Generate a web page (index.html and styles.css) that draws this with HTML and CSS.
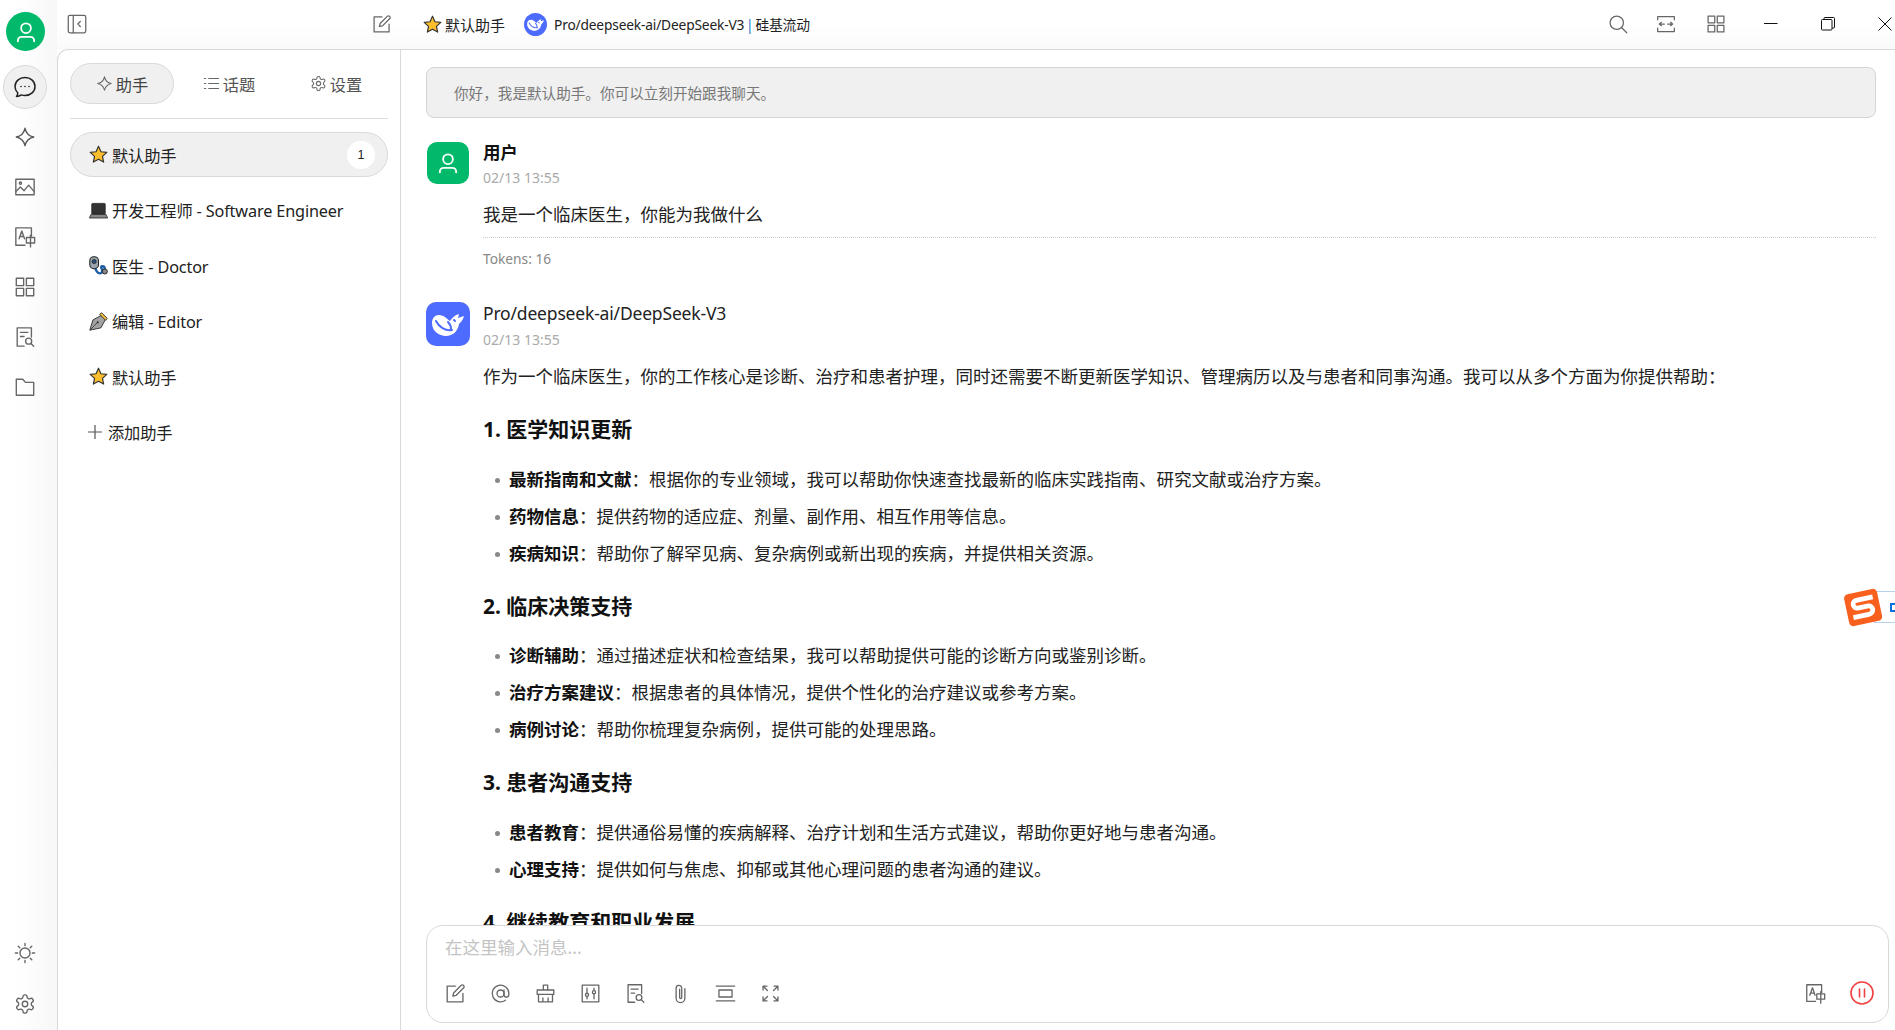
FILE: index.html
```html
<!DOCTYPE html>
<html lang="zh-CN">
<head>
<meta charset="utf-8">
<title>Cherry Studio</title>
<link rel="stylesheet" href="styles.css">
</head>
<body>
<svg class="defs" aria-hidden="true">
  <symbol id="i-edit" viewBox="0 0 24 24"><path d="M12 3.500H2.500v18h18V12"/><path d="M9 15l.8-3.600L18.600 2.600a1.600 1.600 0 0 1 2.300 0l.5.5a1.600 1.600 0 0 1 0 2.300L12.600 14.200z"/></symbol>
  <symbol id="i-sidebar" viewBox="0 0 24 24"><rect x="1.500" y="1.500" width="21" height="21" rx="2"/><path d="M7.500 1.500v21"/><path d="M16 9l-3 3 3 3"/></symbol>
  <symbol id="i-spark" viewBox="0 0 24 24"><path d="M12 2.500c1.200 5.600 3.900 8.300 9.500 9.500-5.600 1.200-8.300 3.900-9.500 9.500-1.200-5.600-3.900-8.300-9.500-9.500 5.600-1.200 8.300-3.900 9.500-9.500z"/></symbol>
  <symbol id="i-image" viewBox="0 0 24 24"><rect x="2" y="3.500" width="20" height="17"/><circle cx="7" cy="7.800" r="1.200"/><path d="M2 17l5-5 4 4 5-6 6 7"/></symbol>
  <symbol id="i-trans" viewBox="0 0 24 24"><path d="M12 21H2V2h17v9"/><path d="M5.500 14l3-8.500 3 8.500M6.600 11.500h3.800"/><rect x="13.500" y="12.500" width="9" height="6"/><path d="M18 10v13"/></symbol>
  <symbol id="i-grid" viewBox="0 0 24 24"><rect x="2.500" y="2.500" width="8" height="8"/><rect x="13.500" y="2.500" width="8" height="8"/><rect x="2.500" y="13.500" width="8" height="8"/><rect x="13.500" y="13.500" width="8" height="8"/></symbol>
  <symbol id="i-docs" viewBox="0 0 24 24"><path d="M11 22H3.500V2h15.500v10"/><path d="M7 7h8M7 11.500h4"/><circle cx="16" cy="16.500" r="3.300"/><path d="M18.500 19l3 3"/></symbol>
  <symbol id="i-folder" viewBox="0 0 24 24"><path d="M2.500 3.500h7l3 3.500h9v14h-19z"/></symbol>
  <symbol id="i-gear" viewBox="0 0 24 24"><path d="M12.220 2h-.44a2 2 0 0 0-2 2v.18a2 2 0 0 1-1 1.730l-.43.25a2 2 0 0 1-2 0l-.15-.08a2 2 0 0 0-2.730.73l-.22.38a2 2 0 0 0 .73 2.730l.15.1a2 2 0 0 1 1 1.720v.51a2 2 0 0 1-1 1.740l-.15.09a2 2 0 0 0-.73 2.730l.22.38a2 2 0 0 0 2.730.73l.15-.08a2 2 0 0 1 2 0l.43.25a2 2 0 0 1 1 1.730V20a2 2 0 0 0 2 2h.44a2 2 0 0 0 2-2v-.18a2 2 0 0 1 1-1.730l.43-.25a2 2 0 0 1 2 0l.15.08a2 2 0 0 0 2.730-.73l.22-.39a2 2 0 0 0-.73-2.730l-.15-.08a2 2 0 0 1-1-1.740v-.5a2 2 0 0 1 1-1.740l.15-.09a2 2 0 0 0 .73-2.730l-.22-.38a2 2 0 0 0-2.730-.73l-.15.08a2 2 0 0 1-2 0l-.43-.25a2 2 0 0 1-1-1.730V4a2 2 0 0 0-2-2z"/><circle cx="12" cy="12" r="3"/></symbol>
  <symbol id="i-user" viewBox="0 0 24 24"><circle cx="12" cy="8.500" r="4.500"/><path d="M4.500 20.500v-.5a3.500 3.500 0 0 1 3.500-3.500h8a3.500 3.500 0 0 1 3.500 3.500v.5"/></symbol>
  <symbol id="i-star" viewBox="0 0 24 24"><path class="star" d="M12 1.500l3.100 7 7.400.8-5.500 5 1.500 7.300-6.500-3.700-6.500 3.700L7 14.300l-5.500-5 7.400-.8z"/></symbol>
  <symbol id="i-whale" viewBox="0 0 44 44"><path class="whale" d="M6 21c0-5 3-8 7-8 5 0 8 4 11 6 2-3 5-6 9-7l-1 4 6-2c-1 4-3 6-5 8-1 7-6 12-13 12C13 34 6 29 6 21z"/><path class="whale-cut" d="M10 19c3 6 9 10 16 9M22 20c2 2 3 5 3 7M28 18l1 1"/></symbol>
</svg>

<div class="app">
  <aside class="rail">
    <div class="rail-avatar"><svg class="ic ic-avatar"><use href="#i-user"/></svg></div>
    <nav class="rail-nav">
      <a class="rail-btn active">
        <svg class="ic ic-msg" viewBox="0 0 24 24"><path d="M12 2.500c5.800 0 10 3.900 10 9s-4.200 9-10 9c-1.300 0-2.500-.2-3.600-.6-1.400 1-3.100 1.500-4.900 1.500.8-1 1.300-2.100 1.300-3.300C3.300 16.500 2 14.200 2 11.500c0-5.100 4.200-9 10-9z"/><circle class="dot" cx="8" cy="11.500" r=".8"/><circle class="dot" cx="12" cy="11.500" r=".8"/><circle class="dot" cx="16" cy="11.500" r=".8"/></svg>
      </a>
      <a class="rail-btn"><svg class="ic ic-spark"><use href="#i-spark"/></svg></a>
      <a class="rail-btn"><svg class="ic"><use href="#i-image"/></svg></a>
      <a class="rail-btn"><svg class="ic"><use href="#i-trans"/></svg></a>
      <a class="rail-btn"><svg class="ic"><use href="#i-grid"/></svg></a>
      <a class="rail-btn"><svg class="ic"><use href="#i-docs"/></svg></a>
      <a class="rail-btn"><svg class="ic"><use href="#i-folder"/></svg></a>
    </nav>
    <div class="rail-bottom">
      <a class="rail-btn">
        <svg class="ic" viewBox="0 0 24 24"><circle cx="12" cy="12" r="5.500"/><path d="M12 1.500v2.500M12 20v2.500M1.500 12H4M20 12h2.500M4.600 4.600l1.700 1.700M17.700 17.700l1.700 1.700M4.600 19.400l1.700-1.700M17.700 6.300l1.700-1.700"/></svg>
      </a>
      <a class="rail-btn"><svg class="ic"><use href="#i-gear"/></svg></a>
    </div>
  </aside>

  <div class="shell">
    <header class="topbar">
      <div class="top-left">
        <svg class="ic ic-20"><use href="#i-sidebar"/></svg>
        <svg class="ic ic-edit-top"><use href="#i-edit"/></svg>
      </div>
      <div class="top-title">
        <svg class="ic-star-s"><use href="#i-star"/></svg>
        <span class="top-name">默认助手</span>
        <svg class="model-logo" viewBox="0 0 44 44"><circle class="logo-bg" cx="22" cy="22" r="22"/><use href="#i-whale"/></svg>
        <span class="top-model">Pro/deepseek-ai/DeepSeek-V3 <span class="sep">|</span> 硅基流动</span>
      </div>
      <div class="top-right">
        <svg class="ic ic-search" viewBox="0 0 24 24"><circle cx="10.500" cy="10.500" r="8"/><path d="M16.500 16.500l6 6"/></svg>
        <svg class="ic ic-20" viewBox="0 0 24 24"><path d="M2 7V3h20v4M2 17v4h20v-4"/><path d="M10 12H4m2.500-2L4 12l2.500 2M14 12h6m-2.500-2l2.500 2-2.500 2"/></svg>
        <svg class="ic ic-20"><use href="#i-grid"/></svg>
        <div class="win-btns">
          <svg class="win" viewBox="0 0 14 14"><path d="M0 6.500h13.500"/></svg>
          <svg class="win" viewBox="0 0 14 14"><rect x=".5" y="2.500" width="10.500" height="10.500" rx="1"/><path d="M3 2.500V1.500a1 1 0 0 1 1-1h8.500a1 1 0 0 1 1 1V10a1 1 0 0 1-1 1H11"/></svg>
          <svg class="win" viewBox="0 0 14 14"><path d="M.5.500l13 13M13.500.500l-13 13"/></svg>
        </div>
      </div>
    </header>

    <div class="body">
      <section class="panel">
        <div class="tabs">
          <a class="tab active"><svg class="ic ic-tab"><use href="#i-spark"/></svg>助手</a>
          <a class="tab"><svg class="ic ic-tab" viewBox="0 0 24 24"><path d="M8 5h14M8 12h14M8 19h14M2 5h2M2 12h2M2 19h2"/></svg>话题</a>
          <a class="tab"><svg class="ic ic-tab"><use href="#i-gear"/></svg>设置</a>
        </div>
        <ul class="assistants">
          <li class="assistant active">
            <svg class="emoji"><use href="#i-star"/></svg><span class="a-name">默认助手</span><span class="badge">1</span>
          </li>
          <li class="assistant">
            <svg class="emoji" viewBox="0 0 24 24"><rect class="lap-screen" x="3.500" y="3" width="17" height="13.500" rx="1"/><path class="lap-base" d="M2.500 17h19l2 4.500H.5z"/></svg><span class="a-name">开发工程师 - Software Engineer</span>
          </li>
          <li class="assistant">
            <svg class="emoji" viewBox="0 0 24 24"><path class="steth-tube" d="M8 14c0 4 3 8 6 8s3-4 2-6-1-3 1-3 3 2 3 4"/><rect class="steth-head" x="1" y="1" width="11" height="15" rx="5"/><circle class="steth-in" cx="6.500" cy="7" r="2.600"/><circle class="steth-end" cx="20" cy="19.500" r="3.200"/></svg><span class="a-name">医生 - Doctor</span>
          </li>
          <li class="assistant">
            <svg class="emoji" viewBox="0 0 24 24"><path class="pen-body" d="M1 23l4-13L16 4l5 5-6 11z"/><path class="pen-tip" d="M16 1l7 7-2 2.500L13.500 3z"/><path class="pen-line" d="M1.500 22.500L10 14"/><circle class="pen-hole" cx="11" cy="13" r="1.400"/></svg><span class="a-name">编辑 - Editor</span>
          </li>
          <li class="assistant">
            <svg class="emoji"><use href="#i-star"/></svg><span class="a-name">默认助手</span>
          </li>
          <li class="assistant add">
            <svg class="ic ic-plus" viewBox="0 0 14 14"><path d="M7 0v14M0 7h14"/></svg><span class="a-name">添加助手</span>
          </li>
        </ul>
      </section>

      <main class="main">
        <div class="chat">
          <div class="notice">你好，我是默认助手。你可以立刻开始跟我聊天。</div>

          <article class="msg msg-user">
            <div class="msg-head">
              <div class="msg-avatar user-avatar"><svg class="ic ic-avatar"><use href="#i-user"/></svg></div>
              <div class="msg-meta">
                <div class="msg-name strong">用户</div>
                <div class="msg-time">02/13 13:55</div>
              </div>
            </div>
            <div class="msg-body">
              <p class="para user-text">我是一个临床医生，你能为我做什么</p>
              <div class="msg-foot">Tokens: 16</div>
            </div>
          </article>

          <article class="msg msg-ai">
            <div class="msg-head">
              <svg class="msg-avatar ai-avatar" viewBox="0 0 44 44"><use href="#i-whale"/></svg>
              <div class="msg-meta">
                <div class="msg-name">Pro/deepseek-ai/DeepSeek-V3</div>
                <div class="msg-time">02/13 13:55</div>
              </div>
            </div>
            <div class="msg-body">
              <p class="para">作为一个临床医生，你的工作核心是诊断、治疗和患者护理，同时还需要不断更新医学知识、管理病历以及与患者和同事沟通。我可以从多个方面为你提供帮助：</p>
              <h3>1. 医学知识更新</h3>
              <ul class="points">
                <li><b>最新指南和文献</b>：根据你的专业领域，我可以帮助你快速查找最新的临床实践指南、研究文献或治疗方案。</li>
                <li><b>药物信息</b>：提供药物的适应症、剂量、副作用、相互作用等信息。</li>
                <li><b>疾病知识</b>：帮助你了解罕见病、复杂病例或新出现的疾病，并提供相关资源。</li>
              </ul>
              <h3>2. 临床决策支持</h3>
              <ul class="points">
                <li><b>诊断辅助</b>：通过描述症状和检查结果，我可以帮助提供可能的诊断方向或鉴别诊断。</li>
                <li><b>治疗方案建议</b>：根据患者的具体情况，提供个性化的治疗建议或参考方案。</li>
                <li><b>病例讨论</b>：帮助你梳理复杂病例，提供可能的处理思路。</li>
              </ul>
              <h3>3. 患者沟通支持</h3>
              <ul class="points">
                <li><b>患者教育</b>：提供通俗易懂的疾病解释、治疗计划和生活方式建议，帮助你更好地与患者沟通。</li>
                <li><b>心理支持</b>：提供如何与焦虑、抑郁或其他心理问题的患者沟通的建议。</li>
              </ul>
              <h3>4. 继续教育和职业发展</h3>
            </div>
          </article>
        </div>

        <div class="composer">
          <div class="placeholder">在这里输入消息...</div>
          <div class="tools">
            <svg class="ic ic-tool"><use href="#i-edit"/></svg>
            <svg class="ic ic-tool" viewBox="0 0 24 24"><circle cx="12" cy="12" r="4"/><path d="M16 8v5.500a2.700 2.700 0 0 0 5.500 0V12a9.500 9.500 0 1 0-3.800 7.600"/></svg>
            <svg class="ic ic-tool" viewBox="0 0 24 24"><path d="M9.500 8V2.500h5V8M2.500 8h19v5h-19zM4 13v8.500h16V13M9 21.500V17M15 21.500V17"/></svg>
            <svg class="ic ic-tool" viewBox="0 0 24 24"><rect x="2.500" y="2.500" width="19" height="19"/><path d="M8 6v5M8 16v2M16 6v2M16 13v5"/><circle cx="8" cy="13.500" r="1.800"/><circle cx="16" cy="10.500" r="1.800"/></svg>
            <svg class="ic ic-tool"><use href="#i-docs"/></svg>
            <svg class="ic ic-tool" viewBox="0 0 24 24"><path d="M17 6.500v11a5 5 0 0 1-10 0V6a3.200 3.200 0 0 1 6.400 0v10.500a1.200 1.200 0 0 1-2.400 0V7"/></svg>
            <svg class="ic ic-tool" viewBox="0 0 24 24"><path d="M1.500 3.500h21M1.500 20.500h21"/><rect x="4.500" y="8" width="15" height="8"/></svg>
            <svg class="ic ic-tool" viewBox="0 0 24 24"><path d="M4 4l4.500 4.500M20 4l-4.500 4.500M4 20l4.500-4.500M20 20l-4.500-4.500M3.500 8V3.500H8M16 3.500h4.500V8M3.500 16v4.500H8M16 20.500h4.500V16"/></svg>
            <span class="tools-gap"></span>
            <svg class="ic ic-tool"><use href="#i-trans"/></svg>
            <svg class="ic ic-stop" viewBox="0 0 24 24"><circle cx="12" cy="12" r="11"/><path d="M9.500 8v8M14.500 8v8"/></svg>
          </div>
        </div>
      </main>
    </div>
  </div>
</div>

<div class="sogou">
  <svg class="sogou-logo" viewBox="0 0 40 40"><rect class="sg-bg" x="4" y="5" width="32" height="31" rx="4"/><path class="sg-s" d="M31 12.500H15c-5 0-5 7 0 7.500h10c5 .5 5 8-1 8H9"/></svg>
  <span class="sogou-tab"><span class="sogou-c"></span></span>
</div>
</body>
</html>
```

FILE: styles.css
```css
* { box-sizing: border-box; }
html, body { margin: 0; height: 100%; overflow: hidden; }
body {
  font-family: "Noto Sans", "Noto Sans CJK SC", sans-serif;
  font-size: 17.5px;
  color: #222;
  background: #fff;
}
.defs { position: absolute; width: 0; height: 0; }
.ic { fill: none; stroke: #666; stroke-width: 1.5; stroke-linecap: round; stroke-linejoin: round; width: 22px; height: 22px; flex: none; display: block; }
.star { fill: #fbbf2d; stroke: #333; stroke-width: 1.5; stroke-linejoin: round; }
.whale { fill: #fff; stroke: none; }
.whale-cut { fill: none; stroke: #4d6bfe; stroke-width: 2; stroke-linecap: round; }
.logo-bg { fill: #4d6bfe; }

.app { display: flex; height: 100vh; }

/* rail */
.rail {
  width: 57px; flex: none; display: flex; flex-direction: column; align-items: center;
  padding: 12px 0 4px 0;
  background: linear-gradient(90deg, #fff 30%, #f7f7f7 100%);
}
.rail-avatar { width: 39px; height: 39px; margin-right: 6px; border-radius: 50%; background: #00b96b; display: flex; align-items: center; justify-content: center; }
.ic-avatar { stroke: #fff; stroke-width: 1.7; width: 26px; height: 26px; }
.rail-nav { display: flex; flex-direction: column; gap: 6px; margin-top: 14px; }
.rail-btn { width: 44px; height: 44px; margin-right: 7px; border-radius: 50%; border: 1px solid transparent; display: flex; align-items: center; justify-content: center; }
.rail-btn.active { background: #f0f0f0; border-color: #d9d9d9; }
.rail-bottom { margin-top: auto; display: flex; flex-direction: column; gap: 7px; }
.ic-msg { stroke: #222; width: 24px; height: 24px; }
.dot { fill: #222; stroke: none; }
.ic-spark { stroke: #555; }

/* shell */
.shell { flex: 1; min-width: 0; display: flex; flex-direction: column; }
.topbar {
  height: 49px; flex: none; display: flex; align-items: center; position: relative;
  background: linear-gradient(180deg, #fff 50%, #fafafa 100%);
  padding: 0 0 1px 10px;
}
.top-left { display: flex; align-items: center; width: 356px; }
.ic-20 { width: 20px; height: 20px; }
.ic-edit-top { width: 20px; height: 20px; margin-left: 285px; }
.top-title { display: flex; align-items: center; font-size: 15px; }
.ic-star-s { width: 19px; height: 19px; margin-right: 3px; }
.top-name { margin-right: 19px; }
.model-logo { width: 23px; height: 23px; margin-right: 7px; }
.top-model { color: #222; font-size: 13.75px; letter-spacing: -.17px; word-spacing: -1.5px; }
.sep { color: #1677c9; }
.top-right { margin-left: auto; display: flex; align-items: center; gap: 30px; padding-right: 3px; }
.ic-search { width: 20px; height: 20px; margin-right: -2px; }
.win-btns { display: flex; gap: 43px; margin-left: 8px; }
.win { width: 14px; height: 14px; fill: none; stroke: #111; stroke-width: 1; overflow: visible; }

.body { flex: 1; min-height: 0; display: flex; border-top: 1px solid #d9d9d9; border-left: 1px solid #d9d9d9; border-top-left-radius: 11px; background: #fff; }

/* assistants panel */
.panel { width: 343px; flex: none; border-right: 1px solid #d9d9d9; padding: 13px 12px 0 12px; }
.tabs { display: flex; gap: 3px; padding-bottom: 14px; border-bottom: 1px solid #dcdcdc; }
.tab { flex: 1; height: 41px; display: flex; align-items: center; justify-content: center; gap: 3px; font-size: 16.25px; color: #555; border: 1px solid transparent; border-radius: 21px; }
.tab.active { background: #f0f0f0; border-color: #d9d9d9; color: #444; }
.ic-tab { width: 17px; height: 17px; }
.assistants { list-style: none; margin: 13px 0 0; padding: 0; display: flex; flex-direction: column; gap: 10.5px; }
.assistant { height: 45px; display: flex; align-items: center; padding: 0 12px 0 18px; font-size: 16.25px; color: #222; border: 1px solid transparent; border-radius: 23px; }
.assistant.active { background: #f0f0f0; border-color: #d9d9d9; }
.emoji { width: 19px; height: 19px; flex: none; margin-right: 4px; overflow: visible; }
.a-name { white-space: nowrap; letter-spacing: -.15px; }
.badge { margin-left: auto; width: 28px; height: 28px; border-radius: 50%; background: #fff; font-size: 12.5px; font-family: "Liberation Sans", sans-serif; display: flex; align-items: center; justify-content: center; }
.add { padding-left: 17px; }
.ic-plus { width: 14px; height: 14px; margin-right: 6px; stroke: #555; stroke-width: 1.2; }
.lap-screen { fill: #333; stroke: #222; stroke-width: 1; }
.lap-base { fill: #888; stroke: #222; stroke-width: 1; }
.steth-tube { fill: none; stroke: #1c5fa8; stroke-width: 3; }
.steth-head { fill: #9aa3ab; stroke: #222; stroke-width: 1.300; }
.steth-in { fill: #24527f; stroke: #222; stroke-width: 1; }
.steth-end { fill: #888; stroke: #222; stroke-width: 1.200; }
.pen-body { fill: #a2a2a2; stroke: #333; stroke-width: 1.200; stroke-linejoin: round; }
.pen-tip { fill: #f4c23c; stroke: #333; stroke-width: 1.200; stroke-linejoin: round; }
.pen-line { stroke: #333; stroke-width: 1; }
.pen-hole { fill: #333; }

/* main */
.main { flex: 1; min-width: 0; display: flex; flex-direction: column; }
.chat { flex: 1; min-height: 0; overflow: hidden; padding: 17px 19px 0 25px; }
.notice { height: 51px; display: flex; align-items: center; padding-left: 27px; font-size: 14.6px; color: #777; background: #f0f0f0; border: 1px solid #d4d4d4; border-radius: 8px; }
.msg-head { display: flex; align-items: flex-start; gap: 14px; }
.msg-user { margin: 22px 0 0 1px; }
.msg-ai { margin-top: 33px; }
.msg-avatar { width: 42px; height: 42px; border-radius: 10px; flex: none; margin-top: 2px; }
.user-avatar { background: #00b96b; display: flex; align-items: center; justify-content: center; }
.ai-avatar { width: 44px; height: 44px; background: #4d6bfe; margin: 0 -1px 0 0; }
.msg-name { font-size: 17.5px; line-height: 25px; color: #222; letter-spacing: -.18px; }
.msg-name.strong { font-weight: 700; color: #111; }
.msg-ai .msg-name { margin: -1px 0 1px; }
.msg-time { font-size: 14px; line-height: 25px; color: #aaa; }
.msg-body { padding-left: 56px; }
.msg-ai .msg-body { padding-left: 57px; }
.para { margin: 10px 0 0; font-size: 17.5px; line-height: 29px; color: #222; }
.user-text { margin-top: 10px; padding-bottom: 8px; border-bottom: 1px dotted #ccc; }
.msg-foot { margin-top: 11px; font-size: 13.75px; line-height: 20px; color: #888; }
h3 { margin: 24px 0 0; font-size: 21px; line-height: 29px; font-weight: 700; color: #111; }
.points { margin: 20.5px 0 0; padding: 0 0 0 26px; list-style: none; }
.points li { position: relative; line-height: 29px; margin-bottom: 8px; font-size: 17.5px; color: #222; }
.points li::before { content: ""; position: absolute; left: -14px; top: 13px; width: 5px; height: 5px; border-radius: 50%; background: #888; }
.points b { font-weight: 700; color: #111; }

/* composer */
.composer { flex: none; height: 98px; margin: 0 6px 7px 25px; background: #fff; border: 1px solid #d9d9d9; border-radius: 17px; padding: 10px 14px 0 18px; position: relative; }
.placeholder { font-size: 17.5px; line-height: 24px; color: #c4c4c4; margin-top: -1px; }
.tools { display: flex; align-items: center; gap: 24px; margin-top: 22px; }
.ic-tool { width: 21px; height: 21px; }
.tools-gap { flex: 1; }
.ic-stop { width: 24px; height: 24px; stroke: #f04040; stroke-width: 1.6; }

/* IME overlay */
.sogou { position: absolute; right: 0; top: 586px; display: flex; align-items: center; }
.sogou-logo { width: 42px; height: 42px; transform: rotate(-12deg); position: relative; z-index: 1; }
.sg-bg { fill: #f9601e; }
.sg-s { fill: none; stroke: #fff; stroke-width: 4.500; }
.sogou-tab { width: 21px; height: 32px; margin-left: -10px; background: #fff; border: 1px solid #b9d0ea; border-right: 0; display: flex; align-items: center; padding-left: 15px; }
.sogou-c { width: 8px; height: 9px; border: 2px solid #0a6fe0; border-right: 0; }
```
